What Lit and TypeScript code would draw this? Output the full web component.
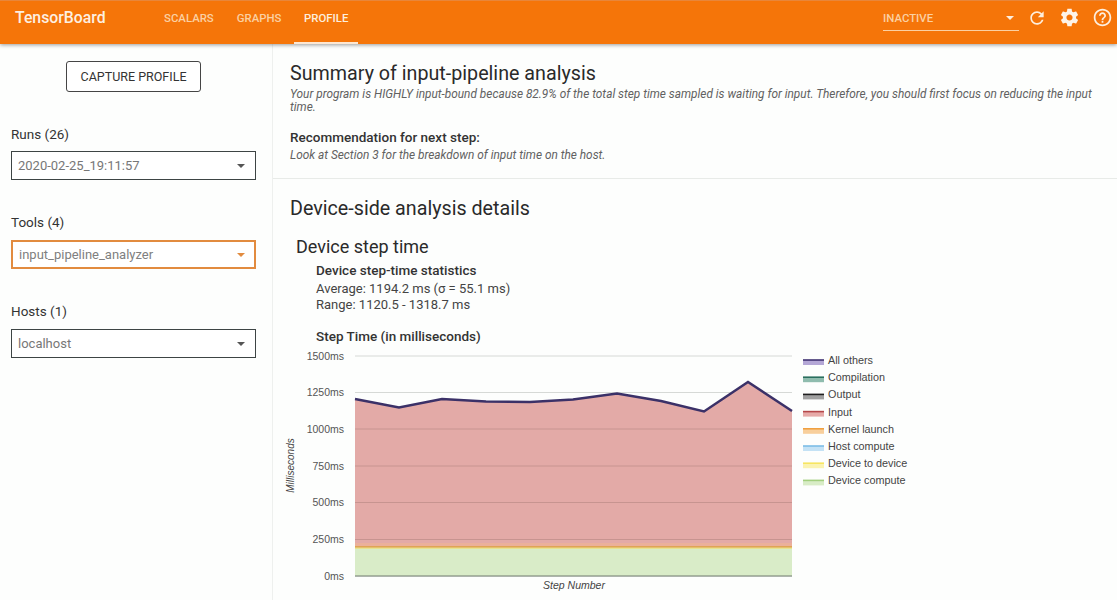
import { LitElement, html, css, svg } from "lit";
import { customElement } from "lit/decorators.js";

const X0 = 355, X1 = 792;
const topPts: [number, number][] = [[355,399],[399,407.5],[442,399],[486,401.5],[530,402],[573,399.5],[617,393.5],[661,401],[704,411.5],[748,382],[792,411]];
const ticks: [string, number][] = [["1500ms",356],["1250ms",392.5],["1000ms",429],["750ms",466],["500ms",502.5],["250ms",539.5],["0ms",576]];
const legend: [string, string, string][] = [
  ["All others","#3f3270","#b4a7d6"],["Compilation","#2a6f5f","#8fbcae"],["Output","#1f1f1f","#a0a0a0"],["Input","#b5474a","#e6aaa8"],
  ["Kernel launch","#f0a040","#f8cf9c"],["Host compute","#7cbde6","#c4e2f5"],["Device to device","#f7e560","#fbf3b0"],["Device compute","#a2cf7e","#d8ecc6"],
];

@customElement("app-root")
export class AppRoot extends LitElement {
  static styles = css`
    :host { display: block; width: 1117px; height: 600px; overflow: hidden; background: #fdfefd; font-family: Roboto, "Liberation Sans", sans-serif; color: #212121; }
    .bar { height: 44px; background: #f57509; display: flex; align-items: flex-start; padding: 0 0 0 15px; box-shadow: 0 1px 4px rgba(0,0,0,.4); position: relative; border-top: 1px solid #e8863a; box-sizing: border-box; }
    .brand { color: #fdf0e2; font-size: 15.8px; font-weight: 500; width: 137.5px; line-height: 34px; }
    .tab { color: #fbd0a2; font-size: 11.4px; font-weight: 500; height: 43px; line-height: 34px; padding: 0 11.5px; box-sizing: border-box; }
    .tab.on { color: #fdeedd; border-bottom: 2px solid #fde7d2; margin-left: 1px; padding: 0 10px; }
    .spacer { flex: 1; }
    .inactive { width: 136px; height: 28px; margin-top: 2px; padding-top: 2px; border-bottom: 1px solid #fbd0a2; color: #fbd0a2; font-size: 11.4px; font-weight: 500; display: flex; align-items: center; justify-content: space-between; box-sizing: border-box; padding-right: 5px; }
    .caret { width: 0; height: 0; border-left: 4px solid transparent; border-right: 4px solid transparent; border-top: 4px solid currentColor; }
    .inactive .caret { color: #fdeedd; }
    .icons { display: flex; align-items: center; gap: 12px; margin: 6px 4px 0 8px; }
    .icons svg { display: block; }
    .body { display: flex; height: 556px; }
    .side { width: 273px; box-sizing: border-box; border-right: 1px solid #eef0ee; padding: 17px 17px 0 11px; flex: none; }
    .capture { display: block; width: 135px; height: 31px; margin: 0 0 0 55px; box-sizing: border-box; border: 1px solid #454545; border-radius: 3px; background: #fff; color: #333; font: 12.5px Roboto, sans-serif; text-align: center; line-height: 29px; }
    .field { margin-top: 34px; }
    .field label { display: block; font-size: 13.5px; color: #333; line-height: 16px; margin-bottom: 10px; }
    .field.first label { margin-bottom: 9px; }
    .sel { height: 29px; box-sizing: border-box; border: 1px solid #3d4444; display: flex; align-items: center; justify-content: space-between; padding: 0 10px 0 6px; color: #777; font-size: 13px; background: #fff; width: 245px; }
    .sel .caret { color: #555; }
    .sel.act { border: 2px solid #e28b3f; color: #808080; padding-left: 6px; padding-right: 9px; }
    .sel.act .caret { color: #e28b3f; }
    .main { flex: 1; min-width: 0; }
    .sum { padding: 18px 20px 0 17px; border-bottom: 1px solid #e8ebe8; height: 135px; box-sizing: border-box; }
    h1 { font-size: 19.7px; font-weight: 400; margin: 0; line-height: 24px; color: #2a2a2a; }
    .sum p { margin: 2px 0 0; font-size: 11.85px; font-style: italic; color: #616161; line-height: 13px; }
    .rec { font-size: 13.5px; font-weight: 500; color: #333; margin-top: 15px; line-height: 16px; }
    .sum .rec + p { margin-top: 4px; }
    .dev { padding: 18px 0 0 17px; }
    h2 { font-size: 18px; font-weight: 400; margin: 0 0 0 6px; line-height: 22px; color: #2a2a2a; padding-top: 15px; }
    .stats { margin-left: 26px; font-size: 13px; line-height: 16px; color: #444; margin-top: 4px; }
    .stats b { font-weight: 500; font-size: 13.5px; line-height: 17px; margin-bottom: 2px; color: #333; display: block; }
    .ct { margin: 15px 0 0 26px; font-size: 13.5px; font-weight: 500; color: #333; line-height: 16px; }
    .chart { display: block; margin-left: -17px; margin-top: 4px; }
    .chart text { font-family: "Liberation Sans", Arial, sans-serif; }
  `;

  render() {
    const line = topPts.map(p => p.join(",")).join(" ");
    return html`
      <div class="bar">
        <div class="brand">TensorBoard</div>
        <div class="tab">SCALARS</div><div class="tab">GRAPHS</div><div class="tab on">PROFILE</div>
        <div class="spacer"></div>
        <div class="inactive"><span>INACTIVE</span><span class="caret"></span></div>
        <div class="icons">
          <svg width="20" height="20" viewBox="0 0 24 24" fill="#fdeedd"><path d="M17.65 6.35C16.2 4.9 14.21 4 12 4c-4.42 0-7.99 3.58-7.99 8s3.57 8 7.99 8c3.73 0 6.84-2.55 7.73-6h-2.08c-.82 2.33-3.04 4-5.65 4-3.31 0-6-2.69-6-6s2.69-6 6-6c1.66 0 3.14.69 4.22 1.78L13 11h7V4l-2.35 2.35z"/></svg>
          <svg width="21" height="21" viewBox="0 0 24 24" fill="#fdf3e8"><path d="M19.43 12.98c.04-.32.07-.64.07-.98s-.03-.66-.07-.98l2.11-1.65c.19-.15.24-.42.12-.64l-2-3.46c-.12-.22-.39-.3-.61-.22l-2.49 1c-.52-.4-1.08-.73-1.69-.98l-.38-2.65C14.46 2.18 14.25 2 14 2h-4c-.25 0-.46.18-.49.42l-.38 2.65c-.61.25-1.17.59-1.69.98l-2.49-1c-.23-.09-.49 0-.61.22l-2 3.46c-.13.22-.07.49.12.64l2.11 1.65c-.04.32-.07.65-.07.98s.03.66.07.98l-2.11 1.65c-.19.15-.24.42-.12.64l2 3.46c.12.22.39.3.61.22l2.49-1c.52.4 1.08.73 1.69.98l.38 2.65c.03.24.24.42.49.42h4c.25 0 .46-.18.49-.42l.38-2.65c.61-.25 1.17-.59 1.69-.98l2.49 1c.23.09.49 0 .61-.22l2-3.46c.12-.22.07-.49-.12-.64l-2.11-1.65zM12 15.5c-1.93 0-3.5-1.57-3.5-3.5s1.57-3.5 3.5-3.5 3.5 1.57 3.5 3.5-1.57 3.5-3.5 3.5z"/></svg>
          <svg width="21" height="21" viewBox="0 0 24 24" fill="#fdeedd"><path d="M11 18h2v-2h-2v2zm1-16C6.48 2 2 6.48 2 12s4.48 10 10 10 10-4.48 10-10S17.52 2 12 2zm0 18c-4.41 0-8-3.59-8-8s3.59-8 8-8 8 3.59 8 8-3.59 8-8 8zm0-14c-2.21 0-4 1.79-4 4h2c0-1.1.9-2 2-2s2 .9 2 2c0 2-3 1.75-3 5h2c0-2.25 3-2.5 3-5 0-2.21-1.79-4-4-4z"/></svg>
        </div>
      </div>
      <div class="body">
        <div class="side">
          <div class="capture">CAPTURE PROFILE</div>
          <div class="field first"><label>Runs (26)</label><div class="sel"><span>2020-02-25_19:11:57</span><span class="caret"></span></div></div>
          <div class="field"><label>Tools (4)</label><div class="sel act"><span>input_pipeline_analyzer</span><span class="caret"></span></div></div>
          <div class="field"><label>Hosts (1)</label><div class="sel"><span>localhost</span><span class="caret"></span></div></div>
        </div>
        <div class="main">
          <div class="sum">
            <h1>Summary of input-pipeline analysis</h1>
            <p>Your program is HIGHLY input-bound because 82.9% of the total step time sampled is waiting for input. Therefore, you should first focus on reducing the input time.</p>
            <div class="rec">Recommendation for next step:</div>
            <p>Look at Section 3 for the breakdown of input time on the host.</p>
          </div>
          <div class="dev">
            <h1>Device-side analysis details</h1>
            <h2>Device step time</h2>
            <div class="stats"><b>Device step-time statistics</b>Average: 1194.2 ms (σ = 55.1 ms)<br>Range: 1120.5 - 1318.7 ms</div>
            <div class="ct">Step Time (in milliseconds)</div>
            ${this.chart(line)}
          </div>
        </div>
      </div>`;
  }

  chart(line: string) {
    return html`<svg class="chart" width="644" height="252" viewBox="273 348 644 252">
      ${ticks.map(([, y]) => svg`<line x1="${X0}" x2="${X1}" y1="${y}" y2="${y}" stroke="#d6d9d6" stroke-width="1"/>`)}
      <polygon points="${X0},546 ${line} ${X1},546" fill="#e3aaa7"/>
      ${ticks.slice(2, 6).map(([, y]) => svg`<line x1="${X0}" x2="${X1}" y1="${y}" y2="${y}" stroke="#c79490" stroke-width="1"/>`)}
      <rect x="${X0}" y="543" width="${X1 - X0}" height="4" fill="#ebb09a"/>
      <rect x="${X0}" y="548" width="${X1 - X0}" height="28" fill="#d9ecc8"/>
      <line x1="${X0}" x2="${X1}" y1="547" y2="547" stroke="#dba03f" stroke-width="1.6"/>
      <line x1="${X0}" x2="${X1}" y1="548.3" y2="548.3" stroke="#f0e070" stroke-width="0.8"/>
      <line x1="${X0}" x2="${X1}" y1="576" y2="576" stroke="#707a70" stroke-width="1"/>
      <polyline points="${line}" fill="none" stroke="#3b3168" stroke-width="2.5"/>
      ${ticks.map(([t, y]) => svg`<text x="344" y="${y + 3.5}" text-anchor="end" font-size="10.5" fill="#555">${t}</text>`)}
      <text transform="translate(294,465.5) rotate(-90)" text-anchor="middle" font-size="10" font-style="italic" fill="#444">Milliseconds</text>
      <text x="574" y="589" text-anchor="middle" font-size="10.5" font-style="italic" fill="#444">Step Number</text>
      ${legend.map(([n, c, f], i) => {
        const y = 361 + i * 17.2;
        return svg`<rect x="803" y="${y - 1}" width="21" height="5" fill="${f}"/><line x1="803" x2="824" y1="${y - 1}" y2="${y - 1}" stroke="${c}" stroke-width="1.6"/>
        <text x="828" y="${y + 3}" font-size="10.8" fill="#444">${n}</text>`;
      })}
    </svg>`;
  }
}
